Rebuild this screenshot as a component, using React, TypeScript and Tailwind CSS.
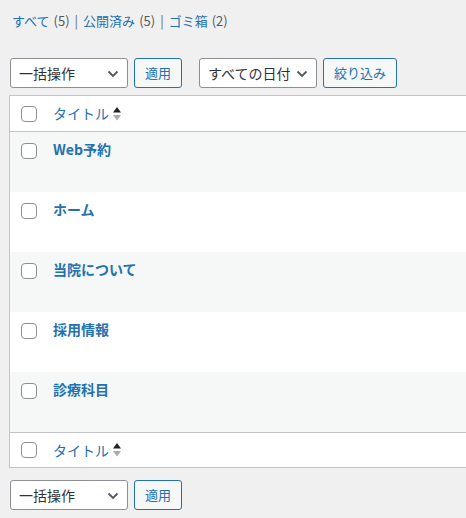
import React from "react";

const font = { fontFamily: '"Noto Sans CJK JP", "Noto Sans", sans-serif' };

function Chevron() {
  return (
    <svg width="12" height="8" viewBox="0 0 12 8" className="absolute right-[8px] top-[11px]">
      <path d="M1.5 1.5 L6 6 L10.5 1.5" fill="none" stroke="#50575e" strokeWidth="1.8" />
    </svg>
  );
}

function Select({ label }: { label: string }) {
  return (
    <div className="relative w-[118px] h-[30px] border border-[#8c8f94] rounded-[3px] bg-white text-[14px] text-[#2c3338] pl-[8px] leading-[28px] shrink-0">
      {label}
      <Chevron />
    </div>
  );
}

function Btn({ label, w }: { label: string; w: string }) {
  return (
    <div className={`${w} h-[30px] border border-[#2271b1] rounded-[3px] bg-[#f6f7f7] text-[13px] text-[#2271b1] flex items-center justify-center shrink-0`}>
      {label}
    </div>
  );
}

function Checkbox() {
  return <div className="w-[16px] h-[16px] border border-[#8c8f94] rounded-[4px] bg-white" />;
}

function SortIcon() {
  return (
    <svg width="10" height="16" viewBox="0 0 10 16" className="ml-[3px]">
      <path d="M1 6.5 L5 1 L9 6.5 Z" fill="#1d2327" />
      <path d="M1 9 L5 14.5 L9 9 Z" fill="#a7aaad" />
    </svg>
  );
}

function HeaderRow({ top }: { top: boolean }) {
  return (
    <div className={`${top ? "h-[36px] border-b" : "h-[35px] border-t"} flex items-center border-[#c3c4c7]`}>
      <div className="w-[43px] pl-[11px] flex items-center">
        <Checkbox />
      </div>
      <div className="flex items-center text-[14px] text-[#2271b1]">
        タイトル
        <SortIcon />
      </div>
    </div>
  );
}

const rows = ["Web予約", "ホーム", "当院について", "採用情報", "診療科目"];

export default function App() {
  return (
    <div className="w-[466px] h-[518px] bg-[#f0f0f1] overflow-hidden" style={font}>
      <div className="pt-[12px] pl-[12px] h-[30px] text-[13px] leading-[18px] flex items-center">
        <span className="text-[#2271b1]">すべて</span>
        <span className="text-[#50575e] ml-[4px]">(5)</span>
        <span className="text-[#646970] mx-[5px]">|</span>
        <span className="text-[#2271b1]">公開済み</span>
        <span className="text-[#50575e] ml-[4px]">(5)</span>
        <span className="text-[#646970] mx-[5px]">|</span>
        <span className="text-[#2271b1]">ゴミ箱</span>
        <span className="text-[#50575e] ml-[4px]">(2)</span>
      </div>
      <div className="mt-[28px] pl-[10px] flex items-center">
        <Select label="一括操作" />
        <div className="ml-[6px]"><Btn label="適用" w="w-[48px]" /></div>
        <div className="ml-[17px]"><Select label="すべての日付" /></div>
        <div className="ml-[6px]"><Btn label="絞り込み" w="w-[74px]" /></div>
      </div>
      <div className="mt-[7px] ml-[9px] w-[480px] border border-[#c3c4c7] bg-white">
        <HeaderRow top={true} />
        {rows.map((r, i) => (
          <div key={r} className={`h-[60px] flex items-start ${i % 2 === 0 ? "bg-[#f6f7f7]" : "bg-white"}`}>
            <div className="w-[43px] pl-[11px] pt-[11px]">
              <Checkbox />
            </div>
            <div className="pt-[7px] text-[14px] leading-[20px] font-semibold text-[#2271b1]">{r}</div>
          </div>
        ))}
        <HeaderRow top={false} />
      </div>
      <div className="mt-[12px] pl-[10px] flex items-center">
        <Select label="一括操作" />
        <div className="ml-[6px]"><Btn label="適用" w="w-[48px]" /></div>
      </div>
    </div>
  );
}
